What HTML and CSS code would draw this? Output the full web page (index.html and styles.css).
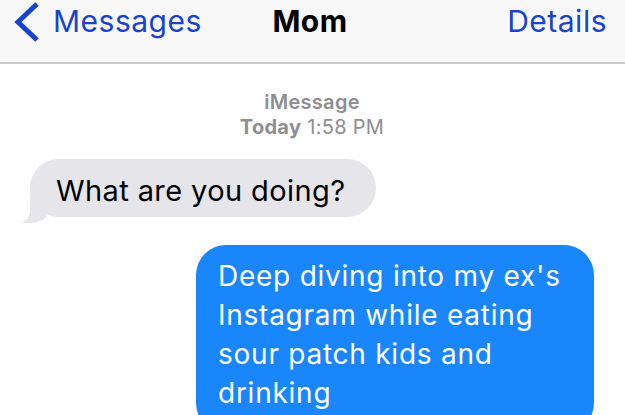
FILE: index.html
```html
<!DOCTYPE html>
<html lang="en">
<head>
  <meta charset="UTF-8" />
  <meta name="viewport" content="width=device-width, initial-scale=1.0" />
  <title>Mom</title>
  <link rel="stylesheet" href="styles.css">
</head>
<body>

  <!-- Top bar -->
  <header class="nav">
    <a class="nav-back" href="#">
      <svg class="chevron" width="28" height="42" viewBox="0 0 28 42">
        <polyline points="24,3 5,21 24,39" fill="none" stroke="currentColor" stroke-width="5" />
      </svg>
      <span>Messages</span>
    </a>
    <div class="nav-title">Mom</div>
    <a class="nav-details" href="#">Details</a>
  </header>

  <!-- Conversation -->
  <main class="thread">
    <div class="meta">
      <div class="meta-service">iMessage</div>
      <div><b>Today</b> 1:58 PM</div>
    </div>

    <div class="bubble bubble-in">What are you doing?</div>

    <div class="bubble bubble-out">Deep diving into my ex's Instagram while eating sour patch kids and drinking</div>
  </main>

</body>
</html>
```

FILE: styles.css
```css
body {
  margin: 0;
  font-family: 'Inter', 'Roboto', sans-serif;
  background: #fff;
  color: #000;
  overflow: hidden;
}

.nav {
  display: grid;
  grid-template-columns: 1fr auto 1fr;
  align-items: start;
  box-sizing: border-box;
  height: 64px;
  padding: 3px 18px 0 13px;
  background: #f8f8f8;
  border-bottom: 2px solid #cbcbcb;
  font-size: 30px;
  line-height: 36px;
  letter-spacing: 0.5px;
}

.nav a {
  color: #1843d0;
  text-decoration: none;
}

.nav-back {
  display: flex;
  align-items: flex-start;
  gap: 12px;
}

.chevron {
  margin-top: -2px;
}

.nav-title {
  font-weight: 700;
}

.nav-details {
  justify-self: end;
}

.thread {
  display: flex;
  flex-direction: column;
  padding: 26px 31px 0 30px;
}

.meta {
  text-align: center;
  color: #8e8e93;
  font-size: 20px;
  line-height: 25px;
  letter-spacing: 0.3px;
  margin-bottom: 19px;
}

.meta-service {
  font-weight: 600;
}

.meta b {
  font-weight: 700;
}

.bubble {
  position: relative;
}

.bubble-in {
  align-self: flex-start;
  background: #e5e5ea;
  border-radius: 29px;
  height: 58px;
  font-size: 29px;
  letter-spacing: 0.4px;
  line-height: 52px;
  padding: 6px 31px 0 26px;
  box-sizing: border-box;
  margin-bottom: 28px;
}

/* tail */
.bubble-in::before {
  content: "";
  position: absolute;
  left: -8px;
  bottom: -6px;
  width: 26px;
  height: 28px;
  background: #e5e5ea;
  border-bottom-right-radius: 20px 10px;
}

.bubble-in::after {
  content: "";
  position: absolute;
  left: -30px;
  bottom: -6px;
  width: 30px;
  height: 28px;
  background: #fff;
  border-bottom-right-radius: 12px;
}

.bubble-out {
  align-self: flex-end;
  width: 398px;
  box-sizing: border-box;
  background: #1a86fb;
  color: #fff;
  font-size: 28px;
  letter-spacing: 0.75px;
  line-height: 39px;
  padding: 12px 18px 20px 22px;
  border-radius: 30px;
}
```
